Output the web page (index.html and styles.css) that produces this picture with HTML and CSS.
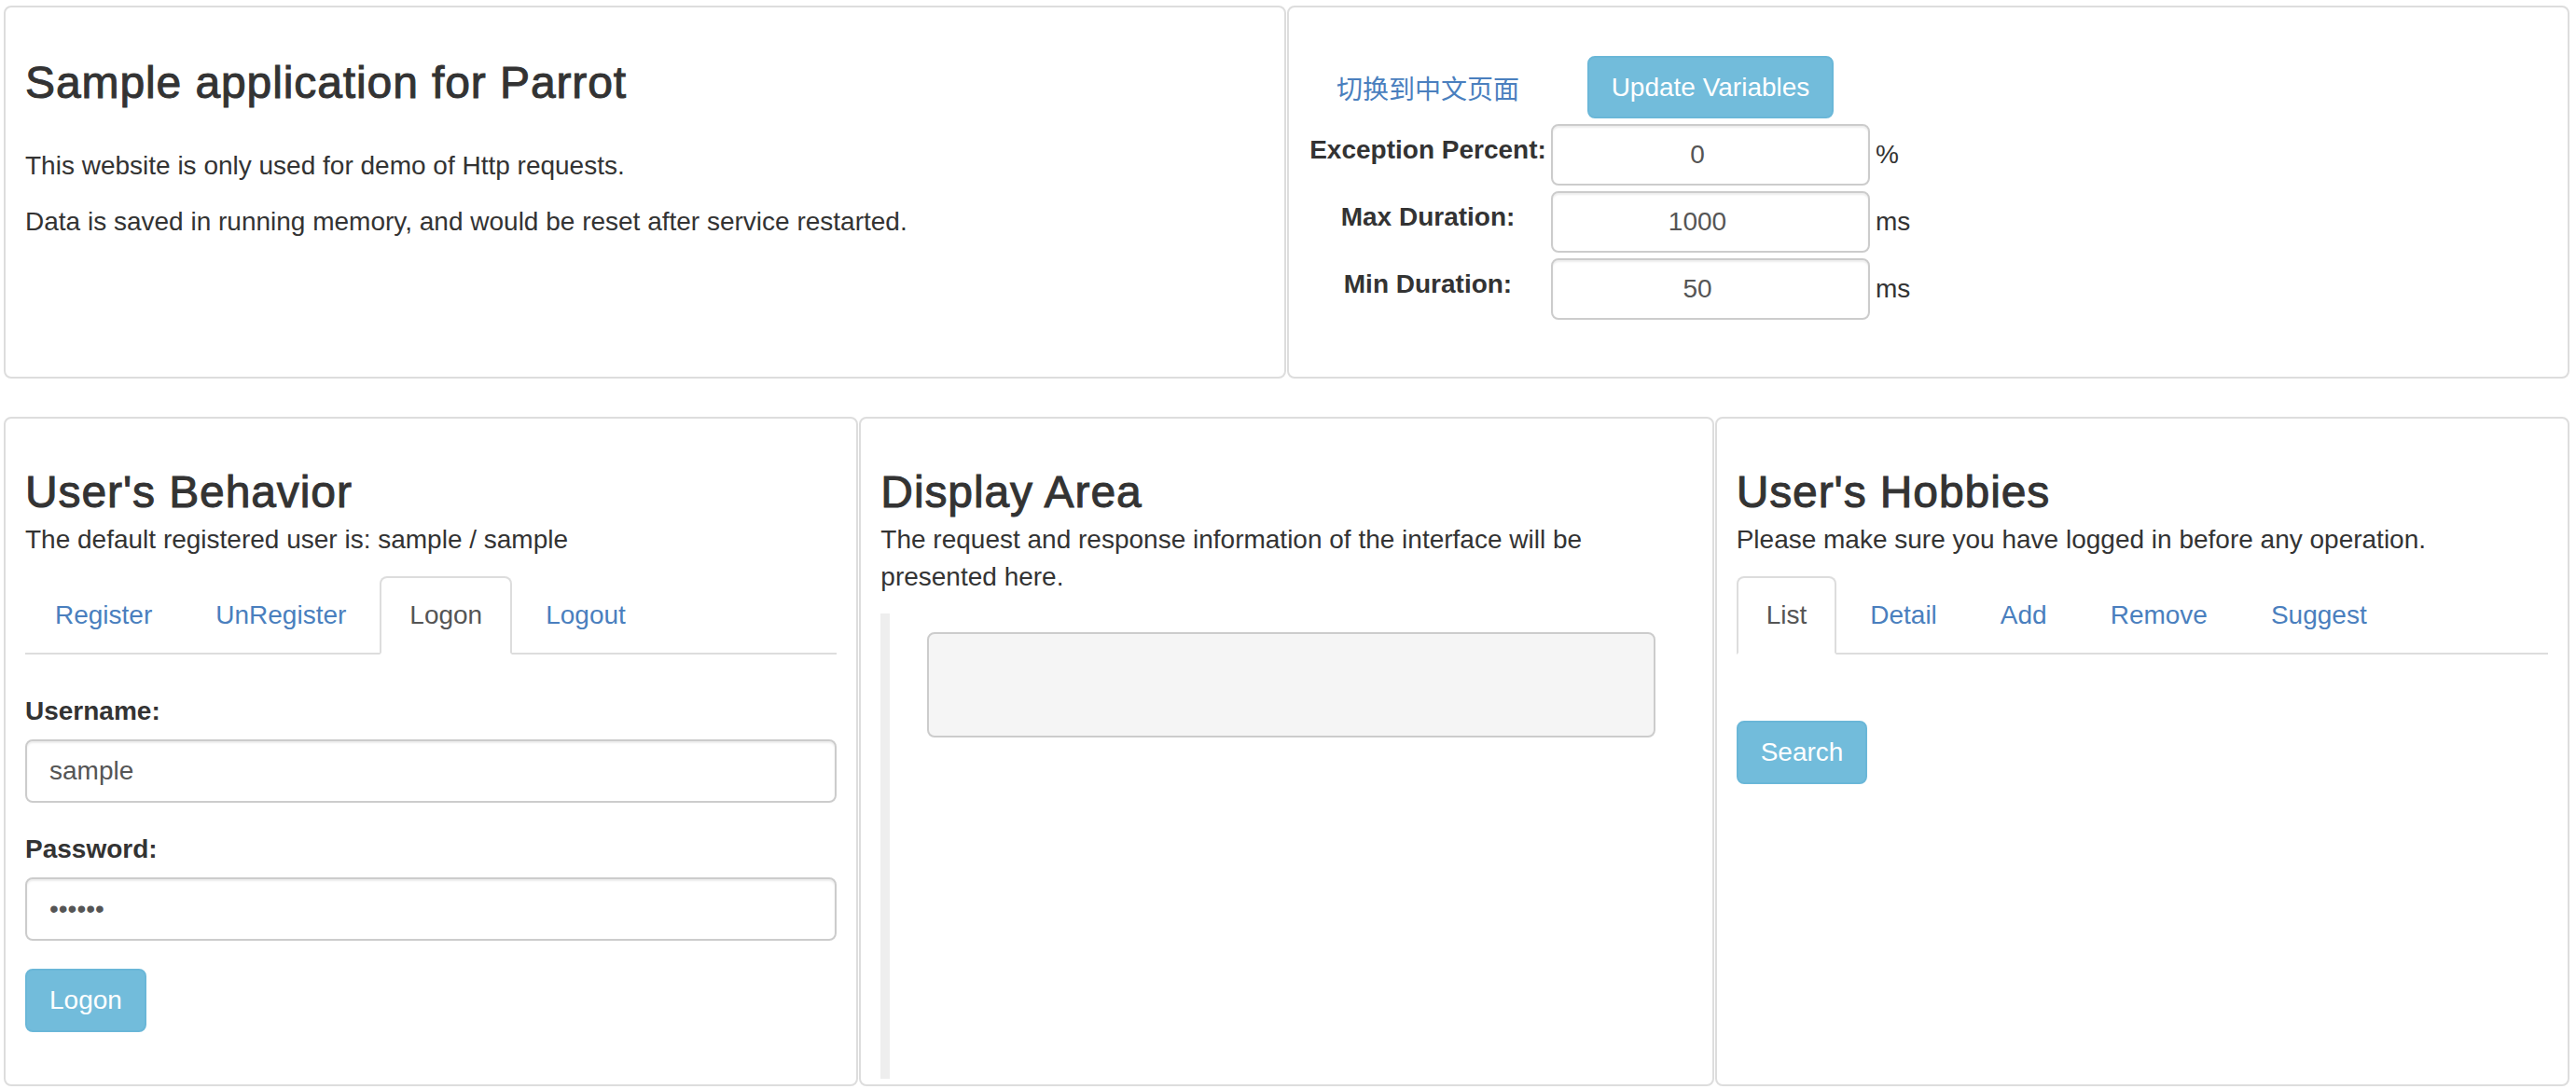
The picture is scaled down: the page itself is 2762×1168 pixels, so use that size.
FILE: index.html
```html
<!DOCTYPE html>
<html lang="en">
<head>
<meta charset="utf-8">
<title>Parrot Sample</title>
<link rel="stylesheet" href="styles.css">
</head>
<body>
<div class="page">
  <div class="top-row">
    <section class="card intro">
      <h3 class="title">Sample application for Parrot</h3>
      <p class="intro-text">This website is only used for demo of Http requests.</p>
      <p class="intro-text">Data is saved in running memory, and would be reset after service restarted.</p>
    </section>
    <section class="card settings">
      <div class="vars">
        <a class="lang" href="#">切换到中文页面</a>
        <button class="btn btn-update" type="button">Update Variables</button>
        <span class="unit"></span>

        <label class="var-label">Exception Percent:</label>
        <input class="var-input" type="text" value="0">
        <span class="unit">%</span>

        <label class="var-label">Max Duration:</label>
        <input class="var-input" type="text" value="1000">
        <span class="unit">ms</span>

        <label class="var-label">Min Duration:</label>
        <input class="var-input" type="text" value="50">
        <span class="unit">ms</span>
      </div>
    </section>
  </div>

  <div class="bottom-row">
    <section class="card panel">
      <h3 class="section-title">User's Behavior</h3>
      <p class="section-text">The default registered user is: sample / sample</p>
      <ul class="tabs">
        <li><a href="#">Register</a></li>
        <li><a href="#">UnRegister</a></li>
        <li class="active"><a href="#">Logon</a></li>
        <li><a href="#">Logout</a></li>
      </ul>
      <div class="tab-pane logon-pane">
        <div class="form-group">
          <label class="form-label">Username:</label>
          <input class="form-input" type="text" value="sample">
        </div>
        <div class="form-group">
          <label class="form-label">Password:</label>
          <input class="form-input" type="password" value="sample">
        </div>
        <button class="btn" type="button">Logon</button>
      </div>
    </section>

    <section class="card panel">
      <h3 class="section-title">Display Area</h3>
      <p class="section-text">The request and response information of the interface will be presented here.</p>
      <div class="quote">
        <div class="output"></div>
      </div>
    </section>

    <section class="card panel">
      <h3 class="section-title">User's Hobbies</h3>
      <p class="section-text">Please make sure you have logged in before any operation.</p>
      <ul class="tabs">
        <li class="active"><a href="#">List</a></li>
        <li><a href="#">Detail</a></li>
        <li><a href="#">Add</a></li>
        <li><a href="#">Remove</a></li>
        <li><a href="#">Suggest</a></li>
      </ul>
      <div class="tab-pane list-pane">
        <button class="btn" type="button">Search</button>
      </div>
    </section>
  </div>
</div>
</body>
</html>
```

FILE: styles.css
```css
* {
  box-sizing: border-box;
}

html,
body {
  margin: 0;
  padding: 0;
  background: #fff;
}

body {
  font-family: "Liberation Sans", Arial, "Noto Sans CJK SC", sans-serif;
  font-size: 28px;
  line-height: 40px;
  color: #333;
}

.page {
  padding: 6px 7px 0 4px;
}

.card {
  border: 2px solid #ddd;
  border-radius: 8px;
  background: #fff;
  padding: 15px 21px 0 21px;
}

/* ---------- top row ---------- */
.top-row {
  display: grid;
  grid-template-columns: 1fr 1fr;
  column-gap: 1px;
  height: 400px;
}

.title {
  font-size: 48px;
  line-height: 52.8px;
  font-weight: normal;
  letter-spacing: 0.9px;
  -webkit-text-stroke: 1px #333;
  margin: 40px 0 42px;
}

.intro-text {
  margin: 0 0 20px;
}

.vars {
  display: grid;
  grid-template-columns: 256px 342px auto;
  grid-template-rows: 67px 66px 66px 66px;
  column-gap: 4px;
  row-gap: 6px;
  align-items: center;
  margin-top: 37px;
}

.lang {
  justify-self: center;
  color: #4a7fbe;
  text-decoration: none;
  font-family: "Noto Sans CJK SC", sans-serif;
}

.var-label {
  font-weight: bold;
  text-align: center;
  white-space: nowrap;
  margin-bottom: 10px;
}

.var-input {
  height: 66px;
  width: 100%;
  border: 2px solid #ccc;
  border-radius: 8px;
  box-shadow: inset 0 2px 2px rgba(0, 0, 0, 0.075);
  padding: 0 52px 0 24px;
  font-family: inherit;
  font-size: 28px;
  color: #555;
  text-align: center;
  background: #fff;
  outline: none;
}

.unit {
  color: #333;
  margin-left: 2px;
}

/* ---------- buttons ---------- */
.btn {
  height: 68px;
  padding: 0 24px;
  border: 2px solid #6ab7d8;
  border-radius: 8px;
  background: #72bcdb;
  color: #fff;
  font-family: inherit;
  font-size: 28px;
  line-height: 40px;
  cursor: pointer;
}

.btn-update {
  height: 67px;
  justify-self: center;
}

/* ---------- bottom row ---------- */
.bottom-row {
  display: grid;
  grid-template-columns: 1fr 1fr 1fr;
  column-gap: 1px;
  height: 718px;
  margin-top: 41px;
}

.section-title {
  font-size: 48px;
  line-height: 52.8px;
  font-weight: normal;
  letter-spacing: 0.9px;
  -webkit-text-stroke: 1px #333;
  margin: 38px 0 4px;
}

.section-text {
  margin: 0 0 19px;
}

.tabs {
  display: flex;
  list-style: none;
  margin: 0;
  padding: 0;
  border-bottom: 2px solid #ddd;
}

.tabs li {
  margin-right: 4px;
  margin-bottom: -2px;
}

.tabs a {
  display: block;
  padding: 20px 30px;
  border: 2px solid transparent;
  border-radius: 8px 8px 0 0;
  color: #4a7fbe;
  text-decoration: none;
  line-height: 40px;
}

.tabs li.active a {
  color: #555;
  background: #fff;
  border-color: #ddd #ddd transparent;
}

.logon-pane {
  padding-top: 41px;
}

.list-pane {
  padding-top: 71px;
}

.form-group {
  margin-bottom: 30px;
}

.form-label {
  display: block;
  font-weight: bold;
  margin-bottom: 10px;
}

.form-input {
  display: block;
  width: 100%;
  height: 68px;
  padding: 0 24px;
  border: 2px solid #ccc;
  border-radius: 8px;
  box-shadow: inset 0 2px 2px rgba(0, 0, 0, 0.075);
  font-family: inherit;
  font-size: 28px;
  color: #555;
  background: #fff;
  outline: none;
}

.quote {
  height: 499px;
  border-left: 10px solid #eee;
  padding: 20px 40px;
}

.output {
  height: 113px;
  background: #f5f5f5;
  border: 2px solid #ccc;
  border-radius: 8px;
}
```
